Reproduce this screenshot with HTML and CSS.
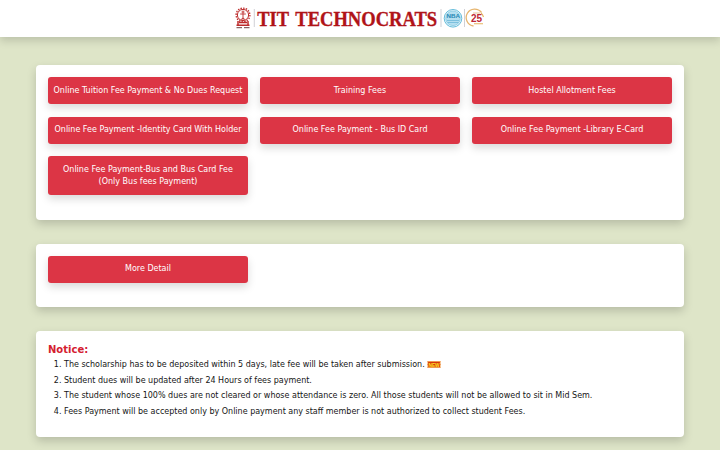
FILE: index.html
```html
<!DOCTYPE html>
<html lang="en">
<head>
<meta charset="utf-8">
<title>TIT Technocrats</title>
<link rel="stylesheet" href="styles.css">
</head>
<body>
<header class="header">
  <svg class="logo" width="252" height="26" viewBox="0 0 252 26">
    <g fill="none" stroke="#bd2b2b">
      <circle cx="9" cy="10" r="5.6" stroke-width="1"/>
      <circle cx="9" cy="10" r="6.900" stroke-width="1.300" stroke-dasharray="1.500 1.200"/>
      <path d="M9 5.500v10M6.200 9h5.600M7.500 7h3M6.500 15l2.500-2 2.500 2" stroke-width=".9"/>
      <path d="M4 16v4M14 16v4M5 17.500h8M2.500 20.300h13" stroke-width="1.500"/>
      <path d="M2.500 22.700h13" stroke="#5b2a2a" stroke-width=".9" stroke-dasharray="5.500 2"/>
    </g>
    <path d="M20.300 4v18M207 4v18M230.500 4v18" stroke="#c5c5cc" stroke-width=".8"/>
    <g transform="translate(23.300 20.500) scale(.9 1)"><text class="logo-text">TIT</text></g>
    <g transform="translate(61.300 20.500) scale(.905 1)"><text class="logo-text">TECHNOCRATS</text></g>
    <circle cx="219" cy="13.300" r="8.800" fill="#e9f6fb" stroke="#54b4d6" stroke-width=".9"/>
    <circle cx="219" cy="13.300" r="7.300" fill="#b5dff0" stroke="#7cc4e0" stroke-width=".7"/>
    <path d="M213 15.500h12M213.500 17.500h11" stroke="#6db8d8" stroke-width=".8"/>
    <text class="nba-text" x="212.500" y="12.900">NBA</text>
    <path d="M247.500 7.500a8.500 8.500 0 1 0-8 13.500" fill="none" stroke="#e6b46c" stroke-width="1.300"/>
    <path d="M247 8a8 8 0 0 1 2.500 4M240 18.700h9" fill="none" stroke="#e8b45e" stroke-width="1.100"/>
    <path d="M239 8h7" stroke="#ddb07b" stroke-width=".8"/>
    <text class="years-text" x="237" y="17">25</text>
  </svg>
</header>
<main class="page">
  <section class="card fees">
    <a class="btn">Online Tuition Fee Payment &amp; No Dues Request</a>
    <a class="btn">Training Fees</a>
    <a class="btn">Hostel Allotment Fees</a>
    <a class="btn">Online Fee Payment -Identity Card With Holder</a>
    <a class="btn">Online Fee Payment - Bus ID Card</a>
    <a class="btn">Online Fee Payment -Library E-Card</a>
    <a class="btn">Online Fee Payment-Bus and Bus Card Fee<br>(Only Bus fees Payment)</a>
  </section>
  <section class="card detail">
    <a class="btn">More Detail</a>
  </section>
  <section class="card notice">
    <h1 class="notice-title">Notice:</h1>
    <ol class="notice-list">
      <li>The scholarship has to be deposited within 5 days, late fee will be taken after submission. <svg class="new" width="14" height="7" viewBox="0 0 14 7"><path d="M.5 .5h13l-.5 1.500 .5 1.500-.5 1.500 .5 1.500H.5L1 5 .5 3.500 1 2z" fill="#d8320c" stroke="#f29a20" stroke-width=".5"/><text class="new-text" x="1.500" y="5.600" textLength="11" lengthAdjust="spacingAndGlyphs">NEW</text></svg></li>
      <li>Student dues will be updated after 24 Hours of fees payment.</li>
      <li>The student whose 100% dues are not cleared or whose attendance is zero. All those students will not be allowed to sit in Mid Sem.</li>
      <li>Fees Payment will be accepted only by Online payment any staff member is not authorized to collect student Fees.</li>
    </ol>
  </section>
</main>
</body>
</html>
```
FILE: styles.css
```css
* { box-sizing: border-box; }
html { overflow: hidden; }
body {
  margin: 0;
  height: 450px;
  overflow: hidden;
  background: #dee5c8;
  color: #151515;
  font: 8px/12px "DejaVu Sans", sans-serif;
}
.header {
  height: 36.5px;
  padding-top: 5px;
  display: flex;
  justify-content: center;
  background: #fff;
  box-shadow: 0 4px 8px rgba(0, 0, 0, .15);
}
.logo { display: block; }
.logo-text {
  font: bold 20.5px "Liberation Serif", serif;
  fill: #b01318;
  stroke: #b01318;
  stroke-width: .35px;
}
.nba-text { font: bold 6.2px "Liberation Sans", sans-serif; fill: #2587b4; }
.years-text { font: bold 10px "Liberation Sans", sans-serif; fill: #bd2636; }
.page {
  padding: 28.5px 36px 0;
  display: flex;
  flex-direction: column;
  gap: 24px;
}
.card {
  background: #fff;
  border-radius: 4px;
  padding: 12px;
  box-shadow: 0 4px 10px rgba(0, 0, 0, .18);
}
.fees, .detail {
  display: grid;
  grid-template-columns: repeat(3, 1fr);
  gap: 12.5px 12px;
  align-content: start;
}
.fees { height: 154.5px; }
.detail { height: 63.5px; }
.notice { height: 106px; }
.btn {
  padding: 7.5px 4px;
  border-radius: 3px;
  background: #dc3545;
  color: #fff;
  text-align: center;
  white-space: nowrap;
  box-shadow: 0 4px 8px rgba(0, 0, 0, .15);
}
.notice-title {
  margin: 0;
  font-size: 10px;
  line-height: 13px;
  color: #d42030;
}
.notice-list {
  margin: 1.4px 0 0;
  padding-left: 16px;
  line-height: 15.5px;
}
.new { vertical-align: -1px; }
.new-text { font: bold 6px "Liberation Sans", sans-serif; fill: #ffe728; }
```
